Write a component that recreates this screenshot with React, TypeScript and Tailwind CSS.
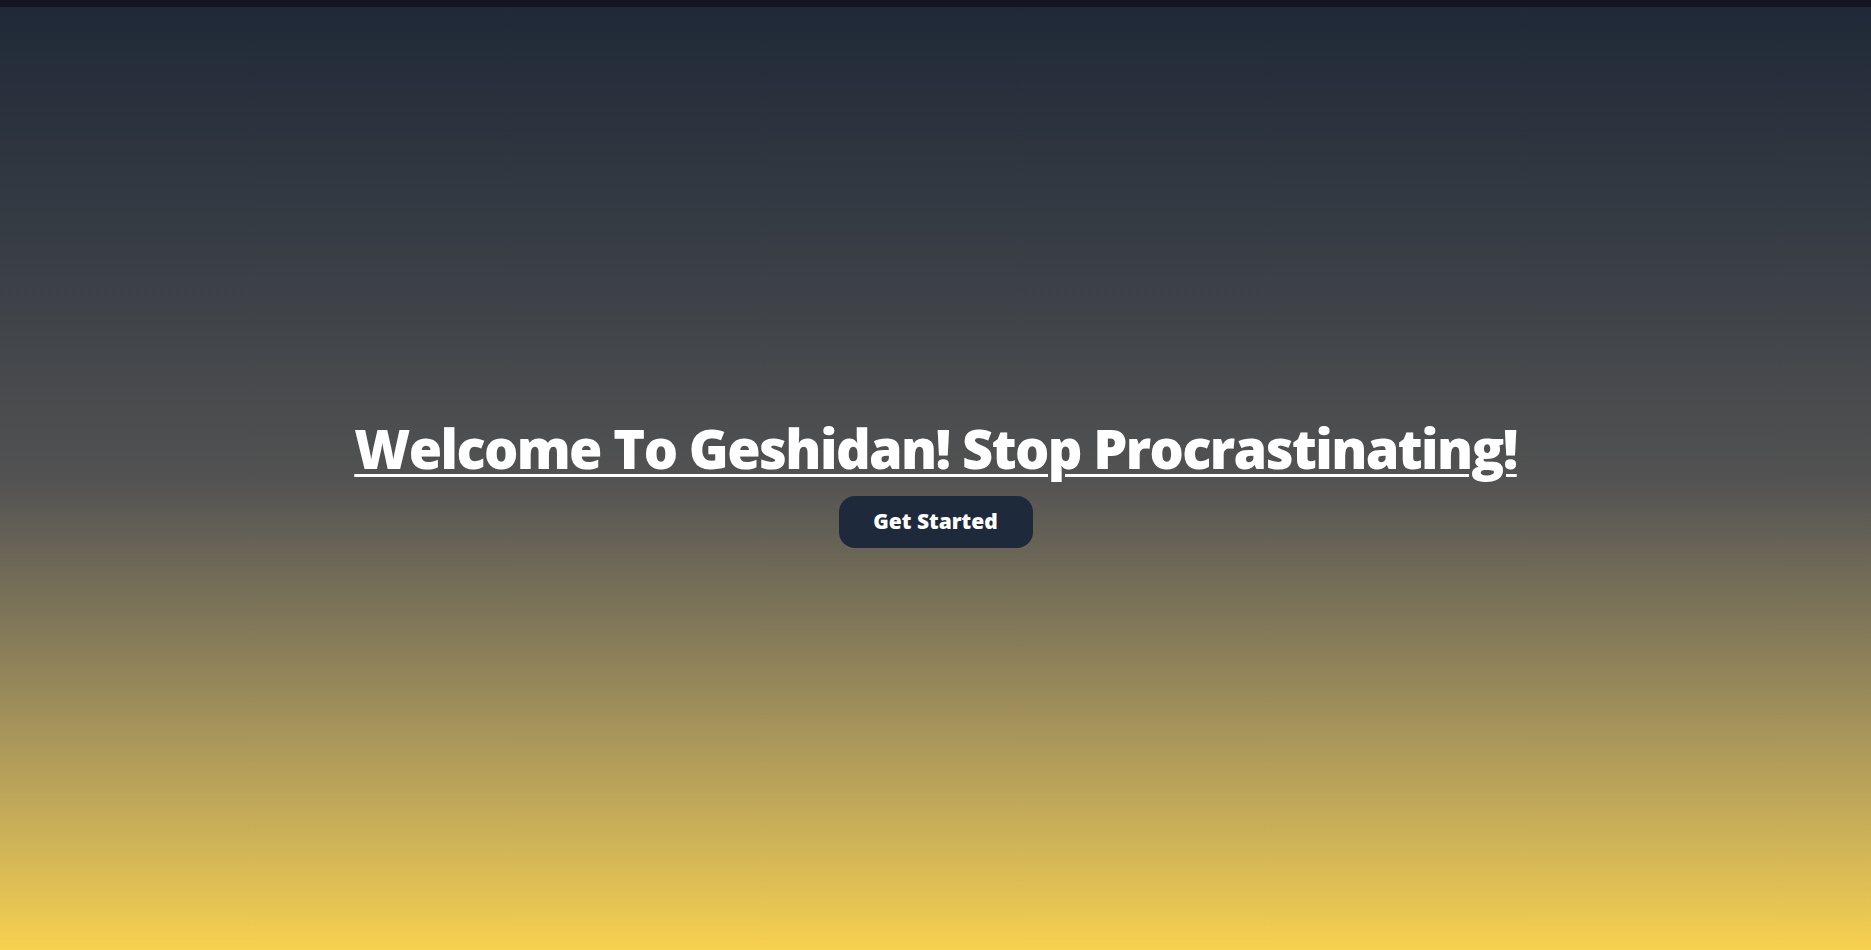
import React from "react";

export default function App() {
  return (
    <div className="flex h-[950px] w-full flex-col font-['Open_Sans',sans-serif]">
      <div className="h-[7px] w-full bg-[#15141f]" />
      <main className="flex flex-1 flex-col items-center justify-center bg-gradient-to-b from-[#1f2937] via-[#525252] to-[#f7d14f] pt-[6px]">
        <h1 className="text-[54px] font-extrabold leading-[64px] tracking-[-1.6px] text-white underline decoration-[3px] underline-offset-[5px]">
          Welcome To Geshidan! Stop Procrastinating!
        </h1>
        <button className="mt-[16px] h-[52px] w-[194px] rounded-[16px] bg-[#1e293b] text-[21px] font-extrabold text-white">
          Get Started
        </button>
      </main>
    </div>
  );
}
